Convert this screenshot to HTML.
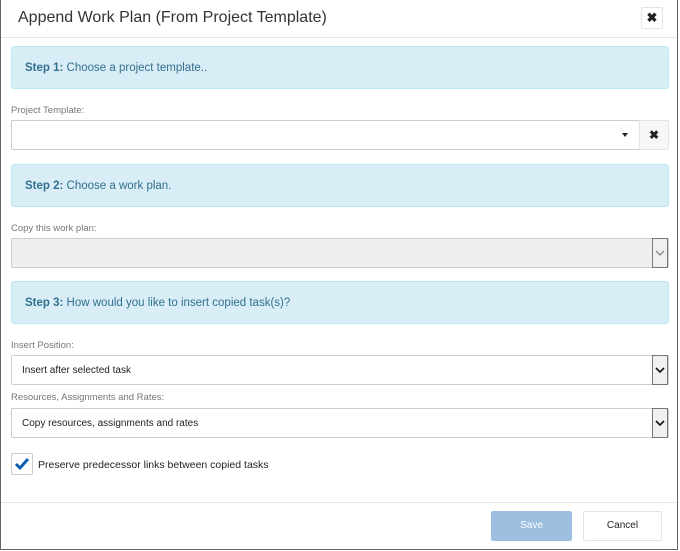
<!DOCTYPE html>
<html><head><style>
*{box-sizing:border-box;margin:0;padding:0}
body{width:680px;height:551px;background:#fff;position:relative;overflow:hidden;font-family:"Liberation Sans",sans-serif;}
.a{position:absolute}
.frame{left:0;top:0;width:678px;height:550px;border:1px solid #666;border-top:none}
.title{left:18px;top:9px;font-size:16px;color:#333}
.xbtn{left:641px;top:7px;width:22px;height:22px;border:1px solid #e4e4e4;border-radius:2px;text-align:center;line-height:20px;font-weight:bold;font-size:13px;color:#222}
.hr{left:1px;width:676px;height:1px;background:#e5e5e5}
.step{left:11px;width:658px;height:43px;background:#d9edf7;border:1px solid #bce8f1;border-radius:3px;font-size:11.5px;color:#31708f;padding-left:13px;line-height:42px}
.step b{font-weight:bold}
.lbl{left:11px;font-size:9.5px;color:#777}
.inp{left:11px;width:658px;height:30px;border:1px solid #ccc;border-radius:2px;background:#fff;font-size:10px;color:#222;padding-left:10px;line-height:30px}
.sel .arr{position:absolute;right:0;top:-1px;width:16px;height:30px;border:1px solid #777;background:#f0f0f0}
.sel .arr svg{position:absolute;left:2px;top:10px}
</style></head><body>
<div class="a frame"></div>
<div class="a title">Append Work Plan (From Project Template)</div>
<div class="a xbtn">✖</div>
<div class="a hr" style="top:37px"></div>

<div class="a step" style="top:46px"><b>Step 1:</b> Choose a project template..</div>
<div class="a lbl" style="top:105px">Project Template:</div>
<div class="a inp" style="top:120px;width:629px"></div>
<div class="a" style="left:622px;top:133px;width:0;height:0;border-left:3px solid transparent;border-right:3px solid transparent;border-top:4px solid #222"></div>
<div class="a" style="left:639px;top:120px;width:30px;height:30px;background:#f7f7f7;border:1px solid #e4e4e4;text-align:center;line-height:28px;font-size:12px;font-weight:bold;color:#222">✖</div>

<div class="a step" style="top:164px"><b>Step 2:</b> Choose a work plan.</div>
<div class="a lbl" style="top:223px">Copy this work plan:</div>
<div class="a inp sel" style="top:238px;background:#eee"><div class="arr"><svg width="10" height="8"><path d="M1 2 L5 6 L9 2" stroke="#888" fill="none" stroke-width="1.3"/></svg></div></div>

<div class="a step" style="top:281px"><b>Step 3:</b> How would you like to insert copied task(s)?</div>
<div class="a lbl" style="top:340px">Insert Position:</div>
<div class="a inp sel" style="top:355px">Insert after selected task<div class="arr"><svg width="10" height="8"><path d="M1 2 L5 6 L9 2" stroke="#111" fill="none" stroke-width="1.6"/></svg></div></div>
<div class="a lbl" style="top:392px">Resources, Assignments and Rates:</div>
<div class="a inp sel" style="top:408px">Copy resources, assignments and rates<div class="arr"><svg width="10" height="8"><path d="M1 2 L5 6 L9 2" stroke="#111" fill="none" stroke-width="1.6"/></svg></div></div>

<div class="a" style="left:11px;top:453px;width:22px;height:22px;border:1px solid #ccc;border-radius:2px;background:#fff"><svg width="20" height="20" style="position:absolute;left:0;top:0"><path d="M4 10 L8 14 L16 5" stroke="#0e5fb0" stroke-width="3" fill="none"/></svg></div>
<div class="a" style="left:38px;top:459px;font-size:10.5px;color:#222">Preserve predecessor links between copied tasks</div>

<div class="a hr" style="top:502px"></div>
<div class="a" style="left:491px;top:511px;width:81px;height:30px;background:#9dbfe0;border-radius:2px;color:#fff;font-size:10px;text-align:center;line-height:30px">Save</div>
<div class="a" style="left:583px;top:511px;width:79px;height:30px;background:#fff;border:1px solid #e2e2e2;border-radius:2px;color:#222;font-size:10px;text-align:center;line-height:28px">Cancel</div>
</body></html>
